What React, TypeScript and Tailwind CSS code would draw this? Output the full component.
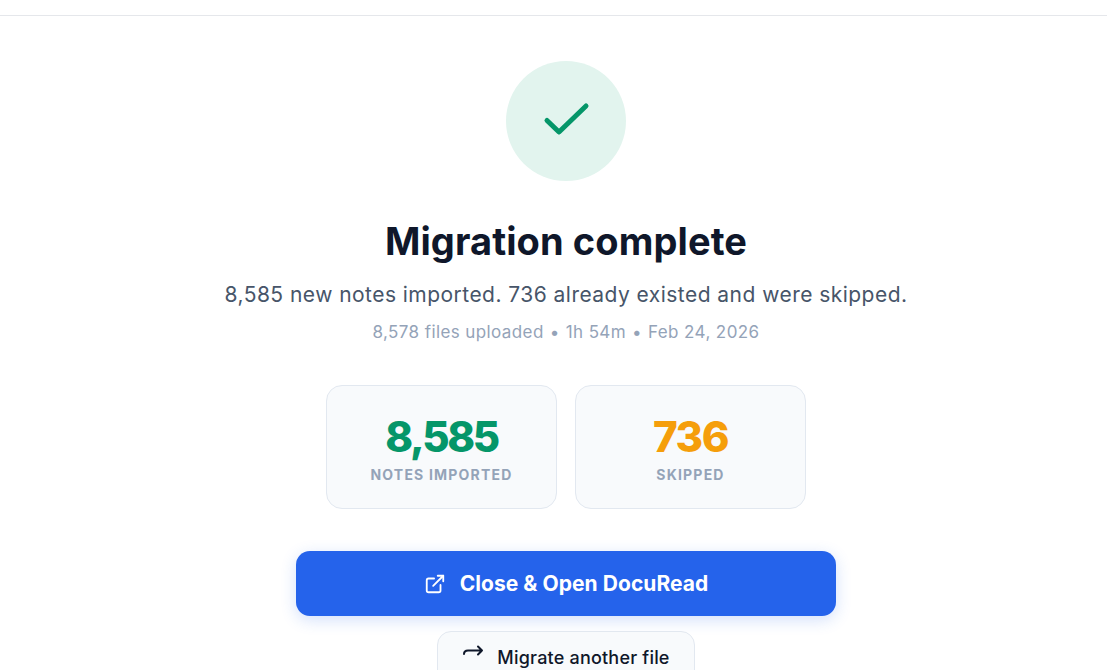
import { ExternalLink } from "lucide-react";

export default function App() {
  return (
    <div className="h-[670px] overflow-hidden bg-white flex flex-col items-center font-['Inter',sans-serif]">
      <div className="h-[16px] w-full shrink-0 border-b border-[#e5e7eb]" />
      <div className="w-full pl-[25px] flex flex-col items-center">
        <div className="mt-[45px] w-[120px] h-[120px] shrink-0 rounded-full bg-[#e2f4ee] flex items-center justify-center">
          <svg width="48" height="48" viewBox="0 0 48 48" fill="none">
            <path d="M5 23.5 L17 35 L44 9" stroke="#059669" strokeWidth="5" strokeLinecap="round" strokeLinejoin="round" />
          </svg>
        </div>
        <h1 className="mt-[37px] h-[46px] leading-[46px] text-[38px] font-bold tracking-[0.1px] text-[#0f172a]">Migration complete</h1>
        <p className="mt-[17px] h-[28px] leading-[28px] text-[21px] tracking-[0.46px] text-[#475569]">8,585 new notes imported. 736 already existed and were skipped.</p>
        <p className="mt-[12px] h-[22px] leading-[22px] text-[17px] tracking-[0.4px] text-[#94a3b8] flex gap-[6px]">
          <span>8,578 files uploaded</span><span>•</span><span>1h 54m</span><span>•</span><span>Feb 24, 2026</span>
        </p>
        <div className="mt-[42px] flex gap-[18px]">
          <div className="w-[231px] h-[124px] rounded-[16px] border border-[#e2e8f0] bg-[#f8fafc] flex flex-col items-center pt-[26px]">
            <div className="text-[42px] leading-[50px] font-extrabold tracking-[-2.4px] text-[#059669]">8,585</div>
            <div className="mt-[3px] text-[14px] leading-[20px] font-bold tracking-[1.2px] text-[#94a3b8]">NOTES IMPORTED</div>
          </div>
          <div className="w-[231px] h-[124px] rounded-[16px] border border-[#e2e8f0] bg-[#f8fafc] flex flex-col items-center pt-[26px]">
            <div className="text-[42px] leading-[50px] font-extrabold tracking-[-1.4px] text-[#f59e0b]">736</div>
            <div className="mt-[3px] text-[14px] leading-[20px] font-bold tracking-[1.2px] text-[#94a3b8]">SKIPPED</div>
          </div>
        </div>
        <button className="mt-[42px] w-[540px] h-[65px] shrink-0 rounded-[14px] bg-[#2563eb] text-white flex items-center justify-center gap-[14px] text-[21px] font-bold tracking-[0.05px] shadow-[0_4px_16px_rgba(37,99,235,0.2)]">
          <ExternalLink size={22} strokeWidth={2} />
          Close &amp; Open DocuRead
        </button>
        <button className="mt-[15px] w-[258px] h-[54px] shrink-0 rounded-[14px] border border-[#e2e8f0] bg-[#f8fafc] text-[#0f172a] flex items-start justify-center gap-[13px] pt-[13px] text-[18px] font-medium tracking-[0.2px] leading-[26px]">
          <svg width="22" height="22" viewBox="0 0 22 22" fill="none" className="-mt-[2px]">
            <path d="M2 11 C2 8.5 3.5 7.5 6 7.5 H20 M16 3.5 L20 7.5 L16 11.5" stroke="#0f172a" strokeWidth="2" strokeLinecap="round" strokeLinejoin="round" />
          </svg>
          Migrate another file
        </button>
      </div>
    </div>
  );
}
